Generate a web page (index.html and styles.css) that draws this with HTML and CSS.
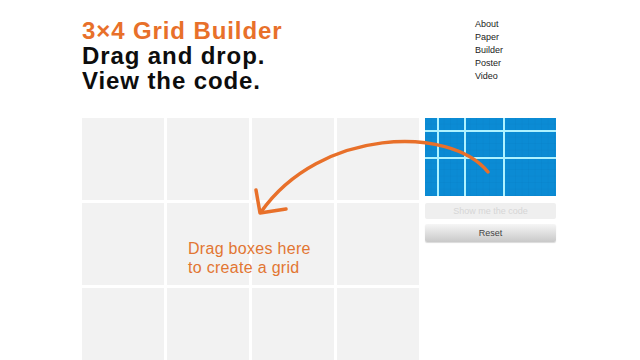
FILE: index.html
```html
<!DOCTYPE html>
<html>
<head>
<meta charset="utf-8">
<title>3×4 Grid Builder</title>
<link rel="stylesheet" href="styles.css">
</head>
<body>
<div class="page">
  <header class="header">
    <h1 class="title"><span class="accent">3×4 Grid Builder</span><br>Drag and drop.<br>View the code.</h1>
    <nav class="nav">
      <a href="#">About</a>
      <a href="#">Paper</a>
      <a href="#">Builder</a>
      <a href="#">Poster</a>
      <a href="#">Video</a>
    </nav>
  </header>
  <main class="main">
    <div class="grid">
      <div class="cell"></div><div class="cell"></div><div class="cell"></div><div class="cell"></div>
      <div class="cell"></div><div class="cell"></div><div class="cell"></div><div class="cell"></div>
      <div class="cell"></div><div class="cell"></div><div class="cell"></div><div class="cell"></div>
      <p class="hint">Drag boxes here<br>to create a grid</p>
    </div>
    <aside class="panel">
      <svg class="preview" width="131" height="78" viewBox="0 0 131 78">
        <defs>
          <pattern id="fine" width="6.5" height="6.5" patternUnits="userSpaceOnUse">
            <path d="M6.5 0V6.5M0 6.5H6.5" stroke="#0670b4" stroke-width="0.6" opacity="0.45"/>
          </pattern>
        </defs>
        <rect width="131" height="78" fill="#0b8bd4"/>
        <rect width="131" height="78" fill="url(#fine)"/>
        <g fill="#aef2ff">
          <rect x="12" y="0" width="2" height="78"/>
          <rect x="39" y="0" width="2" height="78"/>
          <rect x="78" y="0" width="2" height="78"/>
          <rect x="0" y="12" width="131" height="2"/>
          <rect x="0" y="39" width="131" height="2"/>
        </g>
      </svg>
      <button class="btn btn-code" type="button">Show me the code</button>
      <button class="btn btn-reset" type="button">Reset</button>
    </aside>
  </main>
  <svg class="arrow" width="640" height="360" viewBox="0 0 640 360">
    <g fill="none" stroke="#e8702a" stroke-width="3.5" stroke-linecap="round" stroke-linejoin="round">
      <path d="M488 172 C450 125 320 128 261 212"/>
      <path d="M256 190 L260 213 L286 209"/>
    </g>
  </svg>
</div>
</body>
</html>
```

FILE: styles.css
```css
html, body {
  margin: 0;
  padding: 0;
  background: #ffffff;
}

body {
  font-family: "Liberation Sans", Arial, sans-serif;
  color: #111;
}

.page {
  position: relative;
  width: 640px;
  height: 360px;
  overflow: hidden;
  padding-left: 82px;
  box-sizing: border-box;
}

.header {
  display: flex;
  padding-top: 18px;
  height: 118px;
  box-sizing: border-box;
}

.title {
  flex: 0 0 393px;
  margin: 0;
  font-size: 24px;
  line-height: 25px;
  font-weight: bold;
  letter-spacing: 0.9px;
  color: #0d0d0d;
}

.accent {
  color: #e8702a;
}

.nav {
  display: flex;
  flex-direction: column;
  font-size: 9px;
  line-height: 13px;
}

.nav a {
  color: #222;
  text-decoration: none;
}

.main {
  display: flex;
  gap: 6px;
  align-items: flex-start;
}

.grid {
  position: relative;
  display: grid;
  grid-template-columns: repeat(4, 82px);
  grid-auto-rows: 82px;
  gap: 3px;
}

.cell {
  background: #f2f2f2;
}

.hint {
  position: absolute;
  left: 106px;
  top: 121px;
  margin: 0;
  font-size: 16px;
  line-height: 19px;
  letter-spacing: 0.3px;
  color: #e27633;
}

.panel {
  display: flex;
  flex-direction: column;
  width: 131px;
}

.preview {
  display: block;
}

.btn {
  font-family: "Liberation Sans", Arial, sans-serif;
  font-size: 9px;
  border: none;
  border-radius: 2px;
  padding: 0;
  width: 131px;
}

.btn-code {
  margin-top: 7px;
  height: 16px;
  background: #efefef;
  color: #d6d6d6;
}

.btn-reset {
  margin-top: 5px;
  height: 18px;
  background: linear-gradient(#f6f6f6, #c9c9c9);
  color: #444;
  box-shadow: 0 1px 1px rgba(0, 0, 0, 0.15);
}

.arrow {
  position: absolute;
  left: 0;
  top: 0;
  pointer-events: none;
}
```
